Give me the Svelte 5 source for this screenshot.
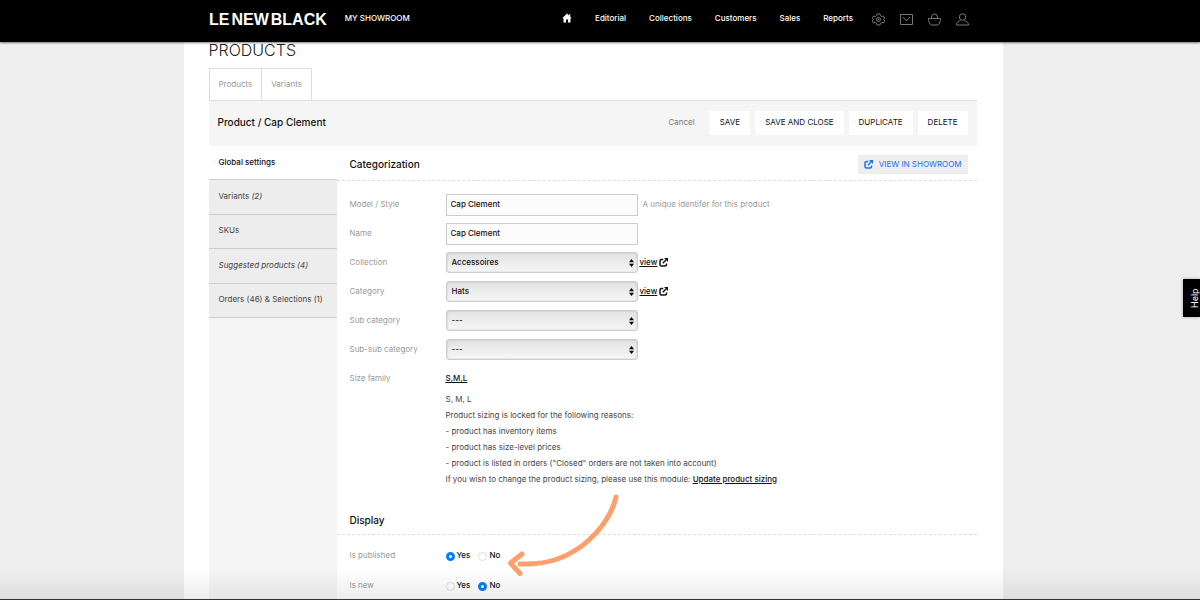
<script>
  const nav = ['Editorial', 'Collections', 'Customers', 'Sales', 'Reports'];
  const tabs = ['Products', 'Variants'];

  const sections = [
    { label: 'Global settings', active: true },
    { label: 'Variants', count: '(2)' },
    { label: 'SKUs' },
    { label: 'Suggested products (4)', italic: true },
    { label: 'Orders (46) & Selections (1)' }
  ];

  const notes = [
    'S, M, L',
    'Product sizing is locked for the following reasons:',
    '- product has inventory items',
    '- product has size-level prices',
    '- product is listed in orders ("Closed" orders are not taken into account)'
  ];

  const selects = [
    { id: 'collection', label: 'Collection', options: ['Accessoires'], view: true },
    { id: 'category', label: 'Category', options: ['Hats'], view: true },
    { id: 'sub-category', label: 'Sub category', options: ['---'] },
    { id: 'sub-sub-category', label: 'Sub-sub category', options: ['---'] }
  ];

  let model = $state('Cap Clement');
  let name = $state('Cap Clement');
  let flags = $state([
    { id: 'published', label: 'Is published', value: 'Yes' },
    { id: 'new', label: 'Is new', value: 'No' }
  ]);
</script>

{#snippet external()}
  <svg class="external" viewBox="0 0 18 18" fill="none" stroke="currentColor" stroke-width="3">
    <path d="M8.500 3H5a3 3 0 0 0-3 3v7a3 3 0 0 0 3 3h7a3 3 0 0 0 3-3v-2" />
    <path d="M7.5 10.500 14 4" />
    <path d="M10 0H18V8Z" fill="currentColor" stroke="none" />
  </svg>
{/snippet}

<div class="page">
  <header class="topbar">
    <div class="topbar-inner">
      <a class="logo" href="#home"><span>LE</span> <span>NEW</span> <span>BLACK</span></a>
      <a class="showroom" href="#showroom">MY SHOWROOM</a>
      <nav>
        <a class="home" href="#home" aria-label="Home">
          <svg width="10" height="10" viewBox="0 0 20 20" fill="currentColor">
            <path d="M10 1 0.500 10.500H3V19h5v-6h4v6h5v-8.500h2.500L16.500 7.500V2.500h-2.500V5Z" />
          </svg>
        </a>
        {#each nav as item}
          <a href="#{item.toLowerCase()}">{item}</a>
        {/each}
      </nav>
      <div class="tools">
        <button aria-label="Settings">
          <svg viewBox="0 0 26 26">
            <path d="M10 2h6l1 3.500 2.500 1.500 3.500-1 2.500 5-2.500 2 2.500 2-2.500 5-3.500-1L17 20.500 16 24h-6l-1-3.500L6.500 19 3 20 0.500 15 3 13 0.500 11 3 6l3.500 1L9 5.500Z" />
            <circle cx="13" cy="13" r="4" />
            <circle cx="13" cy="13" r="1" />
          </svg>
        </button>
        <button aria-label="Messages">
          <svg viewBox="0 0 26 26"><path d="M1 3h24v20H1ZM6 8l7 8 7-8" /></svg>
        </button>
        <button aria-label="Basket">
          <svg viewBox="0 0 26 26"><path d="M1 11h24v4l-3 7q-1 2-3 2H7q-2 0-3-2l-3-7ZM7 11V8q0-6 6-6t6 6v3" /></svg>
        </button>
        <button aria-label="Account">
          <svg viewBox="0 0 26 26"><circle cx="13" cy="8" r="6.500" /><path d="M9 13.500Q7 17 3 18.500Q1 20 1 24h24q0-4-2-5.500Q19 17 17 13.500" /></svg>
        </button>
      </div>
    </div>
  </header>

  <main>
    <h1>PRODUCTS</h1>

    <div class="tabs">
      {#each tabs as tab}
        <a href="#{tab.toLowerCase()}">{tab}</a>
      {/each}
    </div>

    <div class="actions">
      <h2>Product / Cap Clement</h2>
      <a class="cancel" href="#cancel">Cancel</a>
      <button>SAVE</button>
      <button>SAVE AND CLOSE</button>
      <button>DUPLICATE</button>
      <button>DELETE</button>
    </div>

    <div class="body">
      <aside>
        <ul>
          {#each sections as s}
            <li class:active={s.active} class:italic={s.italic}>
              <a href="#section">{s.label} {#if s.count}<em>{s.count}</em>{/if}</a>
            </li>
          {/each}
        </ul>
      </aside>

      <div class="content">
        <section>
          <div class="section-head">
            <h3>Categorization</h3>
            <a class="view-showroom" href="#view">{@render external()} VIEW IN SHOWROOM</a>
          </div>
          <div class="fields">
            <div class="row">
              <label for="model">Model / Style</label>
              <input id="model" type="text" bind:value={model} />
              <span class="hint">A unique identifer for this product</span>
            </div>
            <div class="row">
              <label for="name">Name</label>
              <input id="name" type="text" bind:value={name} />
            </div>
            {#each selects as s}
              <div class="row">
                <label for={s.id}>{s.label}</label>
                <div class="select">
                  <select id={s.id}>
                    {#each s.options as o}
                      <option>{o}</option>
                    {/each}
                  </select>
                  <svg width="5" height="8" viewBox="0 0 10 16"><path d="M5 0 10 6.500H0ZM5 16 0 9.500h10Z" /></svg>
                </div>
                {#if s.view}
                  <a class="view" href="#{s.id}"><span>view</span>{@render external()}</a>
                {/if}
              </div>
            {/each}
            <div class="row size">
              <span class="label">Size family</span>
              <div>
                <a class="family" href="#sizes">S,M,L</a>
                {#each notes as note}
                  <p>{note}</p>
                {/each}
                <p>
                  If you wish to change the product sizing, please use this module:
                  <a href="#sizing">Update product sizing</a>
                </p>
              </div>
            </div>
          </div>
        </section>

        <section class="display">
          <div class="section-head">
            <h3>Display</h3>
          </div>
          <div class="flags">
            {#each flags as flag}
              <div class="row" role="radiogroup" aria-label={flag.label}>
                <span class="label">{flag.label}</span>
                {#each ['Yes', 'No'] as v}
                  <label class="radio">
                    <input type="radio" name={flag.id} value={v} bind:group={flag.value} />
                    {v}
                  </label>
                {/each}
              </div>
            {/each}
          </div>
          <svg class="arrow" width="120" height="84" viewBox="0 0 120 84">
            <path d="M111 3C107 20 96 35 84 46C65 63 44 71 15 70M17 60 5.500 69 15 79.500" />
          </svg>
        </section>
      </div>
    </div>
  </main>

  <button class="help">Help</button>
  <div class="fade"></div>
</div>

<style>
  :global(body) {
    background: #efefef;
    color: #111;
    font-family: Inter, 'Liberation Sans', sans-serif;
    font-size: 8px;
  }
  .page {
    position: relative;
    display: flex;
    flex-direction: column;
    box-sizing: border-box;
    height: 100vh;
    padding-right: 14px;
    overflow: hidden;
  }
  a { color: inherit; text-decoration: none; }
  button { font: inherit; border: none; cursor: pointer; }
  h1, h2, h3, p, ul { margin: 0; padding: 0; }

  .topbar {
    position: relative;
    z-index: 1;
    flex-shrink: 0;
    height: 42px;
    margin-right: -14px;
    padding-right: 14px;
    background: #000;
    color: #fff;
    box-shadow: 0 1px 2px rgba(0, 0, 0, 0.5);
  }
  .topbar-inner {
    display: flex;
    align-items: center;
    box-sizing: border-box;
    max-width: 768px;
    height: 36px;
    margin: 0 auto;
    padding-right: 8px;
    font-weight: 500;
  }
  .logo {
    display: flex;
    gap: 2px;
    padding-top: 3px;
    font-family: 'Liberation Sans', sans-serif;
    font-size: 16px;
    font-weight: 700;
  }
  .showroom { margin-left: 18px; }
  nav { display: flex; align-items: center; gap: 23px; margin-left: auto; }
  nav svg { display: block; }
  .tools { display: flex; gap: 15px; margin-left: 19px; padding-top: 2px; }
  .tools button { padding: 0; background: none; color: #777; }
  .tools svg {
    display: block;
    width: 13px;
    height: 13px;
    fill: none;
    stroke: currentColor;
    stroke-width: 2;
  }

  main {
    flex: 1;
    display: flex;
    flex-direction: column;
    box-sizing: border-box;
    width: 100%;
    max-width: 819px;
    margin: 0 auto;
    padding: 0 26px 0 25px;
    background: #fff;
  }
  h1 { font-size: 16px; font-weight: 300; line-height: 16px; color: #222; }

  .tabs { display: flex; margin-top: 10px; }
  .tabs a {
    padding: 0 9px 1px;
    line-height: 30px;
    color: #999;
    border: 1px solid #ddd;
    border-bottom: none;
  }
  .tabs a + a { border-left: none; }

  .actions {
    display: flex;
    align-items: center;
    gap: 5px;
    box-sizing: border-box;
    height: 46px;
    padding: 0 9px 1px;
    background: #f5f5f5;
    border-top: 1px solid #ddd;
  }
  h2, .cancel { padding-bottom: 2px; }
  h2 { flex: 1; font-size: 10px; font-weight: 500; }
  .cancel { margin-right: 10px; color: #777; }
  .actions button { height: 24px; padding: 0 10px 2px; background: #fff; color: #111; }

  .body { flex: 1; display: flex; }
  aside { flex: 0 0 128px; background: #f5f5f5; }
  ul { display: grid; grid-auto-rows: 1fr; height: 172px; list-style: none; }
  li {
    display: flex;
    align-items: center;
    padding: 0 10px 2px;
    background: #ededed;
    border-bottom: 1px solid #ccc;
    color: #444;
    white-space: nowrap;
  }
  li.active { background: #fff; color: #111; font-weight: 500; }
  .italic { font-style: italic; }

  .content { flex: 1; }
  .section-head {
    display: flex;
    align-items: center;
    justify-content: space-between;
    height: 32px;
    padding: 2px 9px 0 13px;
    border-bottom: 1px dashed #ddd;
  }
  h3 { font-size: 10px; font-weight: 500; }
  .external { width: 9px; height: 9px; }
  .view-showroom {
    display: flex;
    align-items: center;
    gap: 6px;
    height: 19px;
    padding: 0 6px;
    background: #eee;
    color: #1a6cff;
  }

  .fields { padding: 9px 0 0 13px; }
  .row { display: flex; align-items: center; height: 29px; }
  .row > label:first-child, .label { flex: 0 0 96px; padding-bottom: 2px; color: #999; }
  input[type='text'], select {
    box-sizing: border-box;
    width: 192px;
    height: 22px;
    padding: 0 4px 2px;
    border: 1px solid #ccc;
    border-radius: 0;
    background: #fcfcfc;
    color: #111;
    font: inherit;
    font-weight: 500;
  }
  .hint { margin-left: 5px; padding-bottom: 1px; color: #999; }
  .select { position: relative; display: flex; }
  select {
    appearance: none;
    height: 21px;
    padding: 0 5px 1px;
    border-radius: 3px;
    background: linear-gradient(#e2e2e2, #f7f7f7);
    box-shadow: inset 0 0 2px rgba(0, 0, 0, 0.2);
  }
  .select svg { position: absolute; right: 4px; top: 7px; }
  .view { display: flex; align-items: center; gap: 2px; margin-left: 2px; padding-bottom: 1px; font-weight: 500; }
  .view span { text-decoration: underline; }

  .size { align-items: flex-start; height: auto; padding-top: 6px; line-height: 16px; color: #444; }
  .size a { color: #111; font-weight: 500; text-decoration: underline; }
  .size .family { display: block; margin-bottom: 5px; }

  .display { position: relative; margin-top: 17px; }
  .display .section-head { height: 28px; }
  .flags { padding: 6px 0 0 13px; }
  .flags .row { height: 30px; }
  .radio { display: flex; align-items: center; gap: 2px; margin-right: 8px; padding-bottom: 2px; font-weight: 500; }
  .radio input {
    appearance: none;
    box-sizing: border-box;
    width: 9px;
    height: 9px;
    margin: 3px 0 0;
    border: 1px solid #ddd;
    border-radius: 50%;
    background: #fff;
  }
  .radio input:checked { border: 3px solid #0a7aff; }
  .arrow {
    position: absolute;
    left: 168px;
    top: -10px;
    fill: none;
    stroke: #ff9f6b;
    stroke-width: 5;
    stroke-linecap: round;
    stroke-linejoin: round;
  }

  .help {
    position: absolute;
    right: 0;
    top: 279px;
    width: 17px;
    height: 38px;
    padding: 0 6px 0 0;
    background: #000;
    color: #fff;
    font-size: 9px;
    writing-mode: vertical-rl;
    transform: rotate(180deg);
    box-shadow: 0 0 3px rgba(0, 0, 0, 0.3);
  }
  .fade {
    position: absolute;
    inset: auto 0 0;
    height: 32px;
    box-sizing: border-box;
    border-bottom: 1px solid #333;
    background: linear-gradient(transparent, rgba(0, 0, 0, 0.07));
    pointer-events: none;
  }
</style>
